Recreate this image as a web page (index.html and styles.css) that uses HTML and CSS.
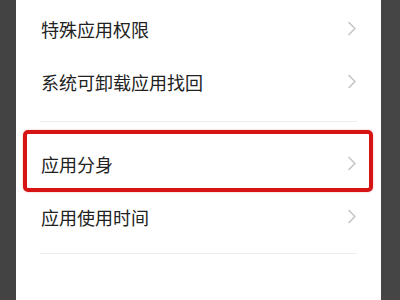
FILE: index.html
```html
<!DOCTYPE html>
<html lang="zh-CN">

<head>
    <meta charset="UTF-8">
    <meta name="viewport" content="width=device-width, initial-scale=1.0">
    <title>应用设置</title>
    <link rel="stylesheet" href="styles.css">
</head>

<body>

    <div id="screen">
        <div class="side-left"></div>

        <div class="panel">
            <!-- First group -->
            <div class="row">
                <span class="label">特殊应用权限</span>
                <svg class="chevron" width="10" height="15" viewBox="0 0 10 15"><polyline points="2,1.5 8,7.5 2,13.5" /></svg>
            </div>
            <div class="row">
                <span class="label">系统可卸载应用找回</span>
                <svg class="chevron" width="10" height="15" viewBox="0 0 10 15"><polyline points="2,1.5 8,7.5 2,13.5" /></svg>
            </div>

            <div class="divider first"></div>

            <!-- Second group -->
            <div class="row highlighted">
                <span class="label">应用分身</span>
                <svg class="chevron" width="10" height="15" viewBox="0 0 10 15"><polyline points="2,1.5 8,7.5 2,13.5" /></svg>
                <div class="mark"></div>
            </div>
            <div class="row">
                <span class="label">应用使用时间</span>
                <svg class="chevron" width="10" height="15" viewBox="0 0 10 15"><polyline points="2,1.5 8,7.5 2,13.5" /></svg>
            </div>

            <div class="divider last"></div>
        </div>

        <div class="side-right"></div>
    </div>

</body>

</html>
```

FILE: styles.css
```css
html,
body {
    margin: 0;
    padding: 0;
    background-color: #444;
}

#screen {
    display: flex;
    width: 400px;
    height: 300px;
    overflow: hidden;
    font-family: "Noto Sans CJK SC", "Noto Sans", sans-serif;
}

.side-left {
    width: 16px;
    background-color: #434343;
}

.side-right {
    flex: 1;
    background-color: #454545;
}

.panel {
    width: 365px;
    background-color: #fff;
    padding-top: 2px;
}

/* Setting rows */
.row {
    position: relative;
    display: flex;
    align-items: center;
    justify-content: space-between;
    height: 53px;
    padding: 0 24px 0 25px;
}

.label {
    font-size: 18px;
    color: #222;
    line-height: 1;
}

.chevron {
    display: block;
}

.chevron polyline {
    fill: none;
    stroke: #c6c6c6;
    stroke-width: 1.6;
    stroke-linecap: round;
    stroke-linejoin: round;
}

.divider {
    height: 1px;
    background-color: #ededed;
    margin: 0 24px;
}

.divider.first {
    margin-top: 13px;
    margin-bottom: 15px;
}

.divider.last {
    margin-top: 10px;
}

/* Red annotation box around the highlighted row */
.mark {
    position: absolute;
    top: -7px;
    bottom: -2px;
    left: 7px;
    right: 8px;
    border: 4.5px solid #d61414;
    border-radius: 5px;
    box-shadow: 0 0 2px rgba(214, 20, 20, 0.35);
}
```
